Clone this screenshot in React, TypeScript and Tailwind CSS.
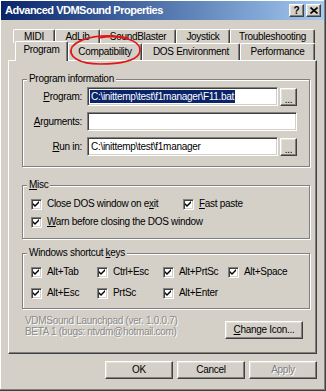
import React from "react";

const RAISED =
  "border border-t-white border-l-white border-r-[#404040] border-b-[#404040] shadow-[inset_-1px_-1px_0_#808080,inset_1px_1px_0_#e4e2de]";
const SUNKEN =
  "border border-t-[#808080] border-l-[#808080] border-b-white border-r-white shadow-[inset_1px_1px_0_#404040,inset_-1px_-1px_0_#d4d0c8]";

function U({ t, i }: { t: string; i: number }) {
  if (i < 0) return <>{t}</>;
  return (
    <>
      {t.slice(0, i)}
      <span className="underline underline-offset-[1px]">{t[i]}</span>
      {t.slice(i + 1)}
    </>
  );
}

function Check({ t, i = -1 }: { t: string; i?: number }) {
  return (
    <div className="flex items-center gap-[5px] h-[12px]">
      <div className={"w-[11px] h-[11px] bg-white flex items-center justify-center shrink-0 " + SUNKEN}>
        <svg width="7" height="7" viewBox="0 0 7 7">
          <path d="M0 2 L2 4 L6 0 L6 2 L2 6 L0 4 Z" fill="#000" />
        </svg>
      </div>
      <span className="whitespace-nowrap">
        <U t={t} i={i} />
      </span>
    </div>
  );
}

function Group({
  label,
  className,
  children,
}: {
  label: React.ReactNode;
  className: string;
  children: React.ReactNode;
}) {
  return (
    <div className={"relative border border-[#808080] shadow-[inset_1px_1px_0_#fff,1px_1px_0_#fff] " + className}>
      <span className="absolute -top-[7px] left-[4px] bg-[#d4d0c8] px-[2px] leading-[12px] whitespace-nowrap">
        {label}
      </span>
      {children}
    </div>
  );
}

function Tab({ label, w, sel = false }: { label: React.ReactNode; w: number; sel?: boolean }) {
  const base =
    "flex items-center justify-center whitespace-nowrap bg-[#d4d0c8] border-t border-l border-r border-t-white border-l-white border-r-[#404040] rounded-tl-[2px] rounded-tr-[2px] shadow-[inset_-1px_0_0_#808080]";
  if (sel)
    return (
      <div
        className={base + " relative z-10 h-[20px] -mt-[2px] -ml-[2px] pb-[2px]"}
        style={{ width: w + 2 }}
      >
        {label}
      </div>
    );
  return (
    <div className={base + " h-full"} style={{ width: w }}>
      {label}
    </div>
  );
}

function Btn({ children, w, h = 18, className = "" }: { children: React.ReactNode; w: number; h?: number; className?: string }) {
  return (
    <div
      className={"flex items-center justify-center bg-[#d4d0c8] whitespace-nowrap " + RAISED + " " + className}
      style={{ width: w, height: h }}
    >
      {children}
    </div>
  );
}

export default function App() {
  return (
    <div className="relative w-[326px] h-[391px] overflow-hidden bg-[#d4d0c8] text-black text-[10px] leading-[12px] tracking-[-0.3px] font-['Liberation_Sans',Arial,sans-serif] pt-[1px] pl-[1px] border-r border-b border-[#404040] shadow-[inset_-1px_-1px_0_#808080,inset_1px_1px_0_#fff] flex flex-col">
      {/* title bar */}
      <div className="mr-[1px] h-[19px] bg-linear-to-r from-[#0a246a] to-[#a6caf0] flex items-center pl-[4px] pr-[3px] shrink-0">
        <span className="text-white font-bold text-[11px] leading-[13px] tracking-[-0.5px] whitespace-nowrap font-['Liberation_Sans_Narrow','Liberation_Sans',sans-serif]">
          Advanced VDMSound Properties
        </span>
        <div className="ml-auto flex gap-[2px] tracking-normal">
          <Btn w={15} h={13} className="text-[10px] font-bold leading-[10px]">
            ?
          </Btn>
          <Btn w={15} h={13}>
            <svg width="8" height="7" viewBox="0 0 8 7">
              <path d="M0.5 0.5 L7.5 6.5 M7.5 0.5 L0.5 6.5" stroke="#000" strokeWidth="1.6" />
            </svg>
          </Btn>
        </div>
      </div>

      {/* tabs */}
      <div className="mt-[9px] ml-[7px] w-[309px] flex flex-col shrink-0">
        <div className="flex h-[14px] pl-[5px]">
          <Tab label="MIDI" w={42} />
          <Tab label="AdLib" w={45} />
          <Tab label="SoundBlaster" w={76} />
          <Tab label="Joystick" w={54} />
          <Tab label="Troubleshooting" w={85} />
        </div>
        <div className="flex h-[17px] pl-[9px] items-start">
          <Tab label={<span className="-mt-[1px]">Program</span>} w={51} sel />
          <Tab label="Compatibility" w={74} />
          <Tab label="DOS Environment" w={98} />
          <Tab label="Performance" w={75} />
        </div>

        {/* panel */}
        <div className="h-[294px] border border-t-white border-l-white border-r-[#404040] border-b-[#404040] shadow-[inset_-1px_-1px_0_#808080] pt-[18px] pl-[13px] pr-[6px] flex flex-col">
          <Group label="Program information" className="h-[88px] pt-[7px] flex flex-col gap-[6px]">
            <div className="flex items-center h-[19px]">
              <span className="w-[59px] text-right">
                <U t="Program:" i={0} />
              </span>
              <div className={"ml-[5px] w-[191px] h-[19px] bg-white flex items-center pl-[2px] " + SUNKEN}>
                <span className="bg-[#0a246a] text-white whitespace-nowrap px-[1px] leading-[13px]">
                  C:\inittemp\test\f1manager\F11.bat
                </span>
              </div>
              <Btn w={17} h={18} className="ml-[2px] items-end pb-[1px]">
                <span className="leading-[8px]">...</span>
              </Btn>
            </div>
            <div className="flex items-center h-[19px]">
              <span className="w-[59px] text-right">
                <U t="Arguments:" i={0} />
              </span>
              <div className={"ml-[5px] w-[210px] h-[19px] bg-white " + SUNKEN} />
            </div>
            <div className="flex items-center h-[19px]">
              <span className="w-[59px] text-right">
                <U t="Run in:" i={0} />
              </span>
              <div className={"ml-[5px] w-[191px] h-[19px] bg-white flex items-center pl-[3px] " + SUNKEN}>
                <span className="whitespace-nowrap">C:\inittemp\test\f1manager</span>
              </div>
              <Btn w={17} h={18} className="ml-[2px] items-end pb-[1px]">
                <span className="leading-[8px]">...</span>
              </Btn>
            </div>
          </Group>

          <Group label={<U t="Misc" i={0} />} className="mt-[18px] h-[54px] pt-[12px] pl-[8px]">
            <div className="grid grid-cols-[152px_1fr] gap-y-[6px]">
              <Check t="Close DOS window on exit" i={21} />
              <Check t="Fast paste" i={0} />
              <div className="col-span-2">
                <Check t="Warn before closing the DOS window" i={0} />
              </div>
            </div>
          </Group>

          <Group
            label={<U t="Windows shortcut keys" i={17} />}
            className="mt-[14px] h-[56px] pt-[12px] pl-[8px]"
          >
            <div className="grid grid-cols-[66px_66px_65px_1fr] gap-y-[9px]">
              <Check t="Alt+Tab" />
              <Check t="Ctrl+Esc" />
              <Check t="Alt+PrtSc" />
              <Check t="Alt+Space" />
              <Check t="Alt+Esc" />
              <Check t="PrtSc" />
              <Check t="Alt+Enter" />
            </div>
          </Group>

          <div className="mt-[6px] flex items-start pl-[3px]">
            <div className="text-[#8a8a8a] leading-[11px] [text-shadow:1px_1px_0_#fff] whitespace-nowrap">
              <div>VDMSound Launchpad (ver. 1.0.0.7)</div>
              <div>BETA 1 (bugs: ntvdm@hotmail.com)</div>
            </div>
            <Btn w={78} h={18} className="ml-auto mr-[7px] mt-[6px]">
              <U t="Change Icon..." i={0} />
            </Btn>
          </div>
        </div>
      </div>

      {/* buttons */}
      <div className="mt-[7px] mr-[8px] flex justify-end gap-[4px]">
        <Btn w={68}>OK</Btn>
        <Btn w={68}>Cancel</Btn>
        <Btn w={68} className="text-[#808080] [text-shadow:1px_1px_0_#fff]">
          Apply
        </Btn>
      </div>

      {/* red hand-drawn circle */}
      <svg className="absolute left-0 top-0 pointer-events-none" width="326" height="391" viewBox="0 0 326 391">
        <path
          d="M128 38 C104 33 80 37 72 47 C67 57 80 64 100 64 C118 64 134 62 139 54 C143 45 134 39 118 37 C110 36 104 37 99 38"
          fill="none"
          stroke="#e01818"
          strokeWidth="1.6"
          strokeLinecap="round"
        />
      </svg>
    </div>
  );
}
